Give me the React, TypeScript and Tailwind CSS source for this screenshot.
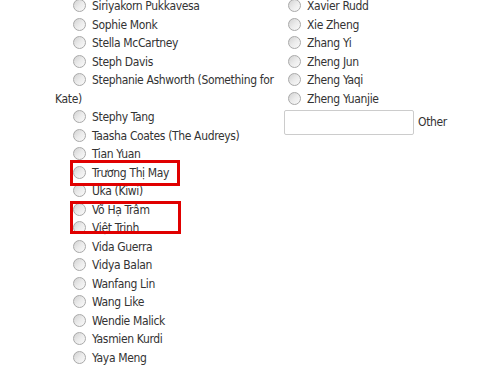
const leftNames = [
  'Siriyakorn Pukkavesa',
  'Sophie Monk',
  'Stella McCartney',
  'Steph Davis',
  'Stephanie Ashworth (Something for Kate)',
  'Stephy Tang',
  'Taasha Coates (The Audreys)',
  'Tian Yuan',
  'Trương Thị May',
  'Uka (Kiwi)',
  'Võ Hạ Trâm',
  'Việt Trinh',
  'Vida Guerra',
  'Vidya Balan',
  'Wanfang Lin',
  'Wang Like',
  'Wendie Malick',
  'Yasmien Kurdi',
  'Yaya Meng',
]

const rightNames = ['Xavier Rudd', 'Xie Zheng', 'Zhang Yi', 'Zheng Jun', 'Zheng Yaqi', 'Zheng Yuanjie']

function Radio() {
  return (
    <span className="inline-block align-[-2px] w-[13px] h-[13px] rounded-full border border-[#a9a9a9] bg-gradient-to-br from-[#d2d2d2] via-[#ebebeb] to-[#fafafa] mr-[6px]" />
  )
}

export default function App() {
  return (
    <div
      className="relative w-[500px] h-[368px] overflow-hidden bg-white text-[#333333] text-[12px] leading-[18.5px] tracking-[-0.35px]"
      style={{ fontFamily: '"DejaVu Sans Condensed", "DejaVu Sans", sans-serif' }}
    >
      <div className="flex -mt-[3px]">
        {/* left column */}
        <div className="w-[229px] ml-[55px]">
          {leftNames.map((name) => (
            <div key={name} className="indent-[18px]">
              <Radio />
              {name}
            </div>
          ))}
        </div>

        {/* right column */}
        <div className="pl-[4px]">
          {rightNames.map((name) => (
            <div key={name}>
              <Radio />
              {name}
            </div>
          ))}
          <div className="flex items-center gap-[4px] mt-[2px] -ml-[4px]">
            <input
              type="text"
              className="w-[130px] h-[25px] border border-[#cccccc] rounded-[2px] bg-white outline-none"
            />
            <span>Other</span>
          </div>
        </div>
      </div>

      {/* red annotation boxes */}
      <div className="absolute left-[70px] top-[160px] w-[110px] h-[26px] border-[3px] border-[#e00000]" />
      <div className="absolute left-[70px] top-[201px] w-[111px] h-[33px] border-[3px] border-[#e00000]" />
    </div>
  )
}
